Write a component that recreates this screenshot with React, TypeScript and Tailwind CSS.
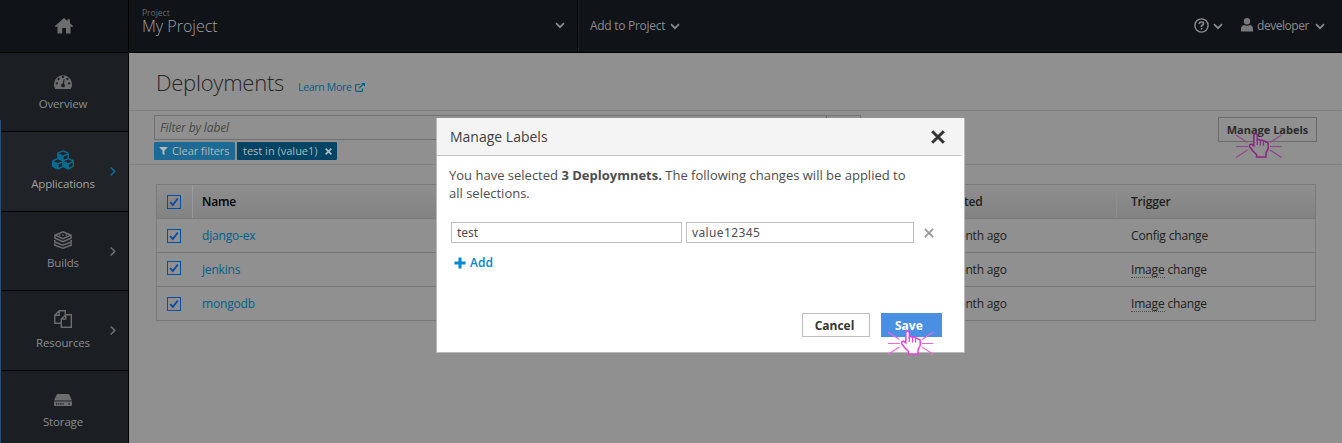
import React from "react";
import { FaCubes, FaFilter } from "react-icons/fa";

function Chevron({ className }: { className: string }) {
  return (
    <svg viewBox="0 0 10 7" className={"h-[7px] w-[10px] shrink-0 fill-none " + className}>
      <path d="M1 1.2 5 5.2 9 1.2" stroke="currentColor" strokeWidth="1.7" />
    </svg>
  );
}

function Cross({ className, width }: { className: string; width: number }) {
  return (
    <svg viewBox="0 0 12 12" className={"shrink-0 fill-none " + className}>
      <path d="M1 1 11 11M11 1 1 11" stroke="currentColor" strokeWidth={width} />
    </svg>
  );
}

function HomeIcon() {
  return (
    <svg viewBox="0 0 18 16" className="mt-[2px] h-[16px] w-[18px] fill-[#6c6d6e]">
      <path d="M9 0 12.500 3V1.200H15V5.200L18 8V8.800H15.500V15.500H11V10H7.200V15.500H2.500V8.800H0V8Z" />
    </svg>
  );
}

function ExternalIcon() {
  return (
    <svg viewBox="0 0 10 9" className="ml-[3px] h-[9px] w-[10px] fill-none" stroke="currentColor">
      <path d="M5.200 1.500H1.500Q.6 1.500 .6 2.400V7.500Q.6 8.400 1.500 8.400H6.600Q7.500 8.400 7.500 7.500V5.500M3.800 5.400 8.500 1" strokeWidth="1.100" />
      <path d="M6.200 0H10V3.800Z" fill="currentColor" stroke="none" />
    </svg>
  );
}

function LayersIcon() {
  return (
    <svg viewBox="0 0 18 18" className="h-[18px] w-[18px] fill-none" stroke="currentColor">
      <path d="M1 4.2 9 .9l8 3.3-8 3.4z" strokeWidth="1.5" />
      <path d="M5 4.2h1.6M8.2 4.2h1.6M11.4 4.2H13" strokeWidth="1.2" />
      <path d="M1 5v2.3l8 3.4 8-3.4V5M.8 9v2l8.2 3.2 8.2-3.2V9M.8 12.3v1.9L9 17.2l8.2-3v-1.9" strokeWidth="1.5" />
    </svg>
  );
}

function FilesIcon() {
  return (
    <svg viewBox="0 0 18 18" className="h-[18px] w-[18px] fill-none" stroke="currentColor" strokeWidth="1.4">
      <path d="M7.3 13.3H.8V5.2L5.2.8h6v3.7M5.2.8v4.4H.8" />
      <path d="M7.3 17.3V9l4.4-4.3h5.6v12.6zM11.7 4.7V9H7.3" />
    </svg>
  );
}

function StorageIcon() {
  return (
    <svg viewBox="0 0 18 12" className="mt-[2px] h-[12px] w-[18px]">
      <path d="M3 0h12l3 6.6H0zM0 7.5h18V11a1 1 0 0 1-1 1H1a1 1 0 0 1-1-1z" fill="currentColor" />
      <path d="M2 9.8h8M14.5 9.8h1.5" stroke="#1b1e22" strokeWidth="1.2" strokeDasharray="1.4 .7" />
    </svg>
  );
}

function GaugeIcon() {
  return (
    <svg viewBox="0 0 18 15" className="h-[15px] w-[18px]">
      <path d="M1.3 15A9 9 0 1 1 16.7 15z" fill="currentColor" />
      <g fill="#1b1e22">
        <circle cx="2.8" cy="9.4" r="1.15" />
        <circle cx="4.6" cy="5" r="1.15" />
        <circle cx="9" cy="3" r="1.15" />
        <circle cx="13.4" cy="5" r="1.15" />
        <circle cx="15.2" cy="9.4" r="1.15" />
        <circle cx="9" cy="11.4" r="1.9" />
        <path d="m8.4 11 1.4-6 .9.2-1.1 6.2z" />
      </g>
    </svg>
  );
}

function ClickHand({ stroke, fill, rays }: { stroke: string; fill: string; rays: string }) {
  return (
    <svg viewBox="0 0 46 25" className="h-[25px] w-[46px] fill-none">
      <path d="M0 2 11.500 9.500M0 13.500h12M0 24.500 11.500 17M45.500 2 34 9.500M45.500 13.500H34M45.500 24.500 34 17" stroke={rays} strokeWidth="1.100" />
      <path
        d="M17.800 13V2.500Q17.800 1 19.500 1T21.300 2.500V7Q23 5.800 24.500 7.500Q26 6.300 27.500 8.200Q29 7.300 30.300 9.300Q32.200 9 32.200 11V15.500L30 20V24H20.500V21.500L16.500 17.500L13.500 13.500Q13.500 10.800 15.800 11.300Z"
        fill={fill}
        stroke={stroke}
        strokeWidth="1.500"
      />
      <path d="M21.300 7v5M24.500 8v4.500M27.500 9v3.500" stroke={stroke} strokeWidth="1.200" />
    </svg>
  );
}

function NavItem({ icon, label, arrow, tone = "text-[#6c6d6e]", text = "text-[#8b8c8d]", gap = "mt-[6px]", className = "" }: {
  icon: React.ReactNode; label: string; arrow?: boolean; tone?: string; text?: string; gap?: string; className?: string;
}) {
  return (
    <div className={"grid w-[128px] shrink-0 grid-cols-[1fr_16px] border-b border-black " + className}>
      <div className="flex flex-col items-center pl-[14px]">
        <div className={"flex h-[18px] items-center " + tone}>{icon}</div>
        <div className={"whitespace-nowrap text-[11.500px] leading-4 tracking-[-0.150px] " + gap + " " + text}>{label}</div>
      </div>
      <div className={"pt-[17px] " + tone}>{arrow && <Chevron className="-ml-[4px] -rotate-90" />}</div>
    </div>
  );
}

function Check() {
  return (
    <svg viewBox="0 0 14 14" className="h-[14px] w-[14px] fill-none">
      <rect x=".5" y=".5" width="13" height="13" stroke="#0a4da6" />
      <path d="M3.200 7.200 5.800 10 10.800 3.500" stroke="#0a4da6" strokeWidth="1.900" />
    </svg>
  );
}

const rows = [
  { name: "django-ex", first: "Config", shift: "pb-0" },
  { name: "jenkins", first: "Image", shift: "pb-[3px]" },
  { name: "mongodb", first: "Image", shift: "pt-[1px]" },
];

export default function App() {
  return (
    <div className="relative h-[443px] w-[1342px] overflow-hidden bg-[#909090] font-['Open_Sans',sans-serif] text-[12px]">
      <header className="flex h-[53px] border-b border-black bg-[#101317] text-[#8b8c8d]">
        <div className="flex w-[129px] items-start justify-center border-r border-black pr-[1px] pt-[16px]">
          <HomeIcon />
        </div>
        <div className="flex w-[449px] items-start justify-between border-r border-black pl-[13px] pr-[12px]">
          <div className="pt-[7px]">
            <div className="text-[8.500px] leading-[11px] text-[#66686a]">Project</div>
            <div className="text-[16px] font-light leading-[16px] text-[#a0a1a2]">My Project</div>
          </div>
          <Chevron className="mt-[22px]" />
        </div>
        <div className="flex flex-1 items-start border-l border-[#202225] pl-[11px] pt-[18px]">
          <span className="leading-4 tracking-[-0.280px]">Add to Project</span>
          <Chevron className="ml-[5px] mt-[5px]" />
          <div className="ml-auto flex pr-[17px]">
            <svg viewBox="0 0 15 15" className="h-[15px] w-[15px] fill-none" stroke="currentColor">
              <circle cx="7.500" cy="7.500" r="6.600" strokeWidth="1.400" />
              <path d="M5.300 6V5.300Q5.500 4 7.500 4T9.600 5.700Q9.600 6.700 7.500 7.700V9M7.500 10v1.500" strokeWidth="1.600" />
            </svg>
            <Chevron className="ml-[4px] mt-[5px]" />
            <svg viewBox="0 0 12 14" className="ml-[18px] h-[14px] w-[12px] fill-[#77787a]">
              <circle cx="6" cy="3.300" r="3.200" />
              <path d="M0 13.500V11Q0 7.500 3 7q3 1.500 6 0 3 .5 3 4v2.500z" />
            </svg>
            <span className="ml-[4px] leading-4 tracking-[-0.450px]">developer</span>
            <Chevron className="ml-[6px] mt-[5px]" />
          </div>
        </div>
      </header>

      <div className="flex h-[390px]">
        <nav className="flex w-[129px] shrink-0 flex-col border-r border-black bg-[#1b1e22]">
          <NavItem icon={<GaugeIcon />} label="Overview" className="h-[79px] pt-[19px]" />
          <NavItem icon={<FaCubes className="h-[22px] w-[22px]" />} label="Applications" arrow tone="text-[#086b92]" text="text-[#a0a1a2]" gap="mt-[7px]" className="h-[80px] bg-[#202327] pt-[19px]" />
          <NavItem icon={<LayersIcon />} label="Builds" arrow className="h-[79px] pt-[19px]" />
          <NavItem icon={<FilesIcon />} label="Resources" arrow gap="mt-[7px]" className="h-[80px] pt-[19px]" />
          <NavItem icon={<StorageIcon />} label="Storage" className="h-[80px] pt-[19px]" />
        </nav>

        <main className="flex flex-1 flex-col">
          <div className="flex h-[58px] items-start border-b border-[#808080] pl-[27px]">
            <h1 className="w-[128px] whitespace-nowrap pt-[14px] text-[22px] font-light leading-[30px] tracking-[-0.250px] text-[#252627]">Deployments</h1>
            <a className="ml-[14px] mt-[27px] flex items-center text-[10.500px] font-medium leading-[14px] tracking-[-0.300px] text-[#005f8c]">
              Learn More
              <ExternalIcon />
            </a>
          </div>
          <div className="flex h-[54px] items-start justify-between border-b border-[#828282] pl-[25px] pr-[25px]">
            <div className="pt-[4px]">
              <div className="flex h-[25px] w-[707px]">
                <div className="w-[673px] border border-[#707070] pl-[5px] text-[12px] italic leading-[23px] tracking-[-0.130px] text-[#484848]">Filter by label</div>
                <div className="flex-1 border border-l-0 border-[#777]" />
              </div>
              <div className="mt-[2px] flex gap-[2px] text-[11px] font-medium leading-[18px] text-[#b0b8bc]">
                <div className="flex h-[18px] w-[81px] items-center whitespace-nowrap rounded-[1px] bg-[#1d6a94] pl-[5px] tracking-[-0.080px]">
                  <FaFilter className="mr-[4px] h-[8px] w-[9px]" />
                  Clear filters
                </div>
                <div className="flex h-[18px] w-[100px] items-center whitespace-nowrap rounded-[1px] bg-[#004465] pl-[6px]">
                  <span className="w-[82px]">test in (value1)</span>
                  <Cross className="h-[7px] w-[7px]" width={3} />
                </div>
              </div>
            </div>
            <div className="mt-[6px] flex h-[25px] w-[99px] items-center justify-center border border-[#6b6b6b] pt-[1px] text-[11px] font-bold text-[#2d2d2d]">Manage Labels</div>
          </div>

          <div className="ml-[27px] mt-[19px] w-[1160px] border border-[#797979] tracking-[-0.170px] text-[#202020]">
            <div className="grid h-[33px] grid-cols-[36px_741px_183px_1fr] items-center bg-gradient-to-b from-[#8e8e8e] to-[#838383] font-semibold">
              <div className="flex h-full items-center border-r border-[#999] pl-[10px]"><Check /></div>
              <div className="pl-[9px] pt-[1px] text-black">Name</div>
              <div className="flex h-full items-center border-r border-[#8e8e8e] pl-[4px]">Created</div>
              <div className="pl-[14px]">Trigger</div>
            </div>
            {rows.map((r) => (
              <div key={r.name} className="grid h-[34px] grid-cols-[36px_726px_198px_1fr] items-center border-t border-[#797979]">
                <div className={"pl-[10px] " + r.shift}><Check /></div>
                <div className="pl-[9px] font-medium text-[#005f8c]">{r.name}</div>
                <div className="pl-[19px]">a month ago</div>
                <div className="pl-[14px]">
                  <span className={r.first === "Image" ? "inline-block border-b border-dotted border-[#505050] leading-[14px]" : ""}>{r.first}</span> change
                </div>
              </div>
            ))}
          </div>
        </main>
      </div>

      <div className="absolute left-0 top-[120px] h-[323px] w-[1px] bg-[#274e7b]" />

      <section role="dialog" className="absolute left-[436px] top-[118px] flex h-[235px] w-[529px] flex-col border border-t-0 border-[#b9b9b9] bg-white text-[#4d4d4d]">
        <div className="mr-[3px] flex h-[38px] items-center justify-between border-b border-[#c2c2c2] bg-[#f4f4f4] pl-[13px] pr-[16px] shadow-[3px_0_0_#f4f4f4]">
          <h2 className="text-[14px] text-[#404040]">Manage Labels</h2>
          <Cross className="h-[14px] w-[14px] text-[#333]" width={2.5} />
        </div>
        <p className="whitespace-nowrap pl-[12px] pt-[10px] text-[13px] leading-[18px]">
          You have selected <b>3 Deploymnets.</b> The following changes will be applied to
          <br />
          all selections.
        </p>
        <div className="mt-[20px] flex h-[21px] items-center pl-[14px] font-['Noto_Sans',sans-serif] text-[12px]">
          <div className="flex h-full w-[231px] items-center border border-[#bebebe] pl-[5px]">test</div>
          <div className="ml-[4px] flex h-full w-[228px] items-center border border-[#bebebe] pl-[5px] tracking-[0.380px]">value12345</div>
          <Cross className="ml-[10px] h-[10px] w-[10px] text-[#999]" width={2.1} />
        </div>
        <div className="mt-[11px] flex h-[18px] items-center pl-[17px] font-semibold text-[#0088ce]">
          <svg viewBox="0 0 12 12" className="mr-[4px] h-[12px] w-[12px]">
            <path d="M6 .5v11M.5 6h11" stroke="currentColor" strokeWidth="3" />
          </svg>
          Add
        </div>
        <div className="mt-[41px] flex h-[24px] justify-end gap-[11px] pr-[22px] font-bold">
          <div className="flex w-[68px] items-center justify-center border border-[#bebebe] pr-[3px] pt-[1px] text-[#363636]">Cancel</div>
          <div className="flex w-[61px] items-center bg-[#4a90e2] pl-[14px] pt-[1px] text-white">Save</div>
        </div>
      </section>

      <div className="absolute left-[1236px] top-[133px]"><ClickHand stroke="#8c2387" fill="#909090" rays="#95458f" /></div>
      <div className="absolute left-[888px] top-[330px]"><ClickHand stroke="#ee3de2" fill="#ffffff" rays="#ee65e4" /></div>
    </div>
  );
}
